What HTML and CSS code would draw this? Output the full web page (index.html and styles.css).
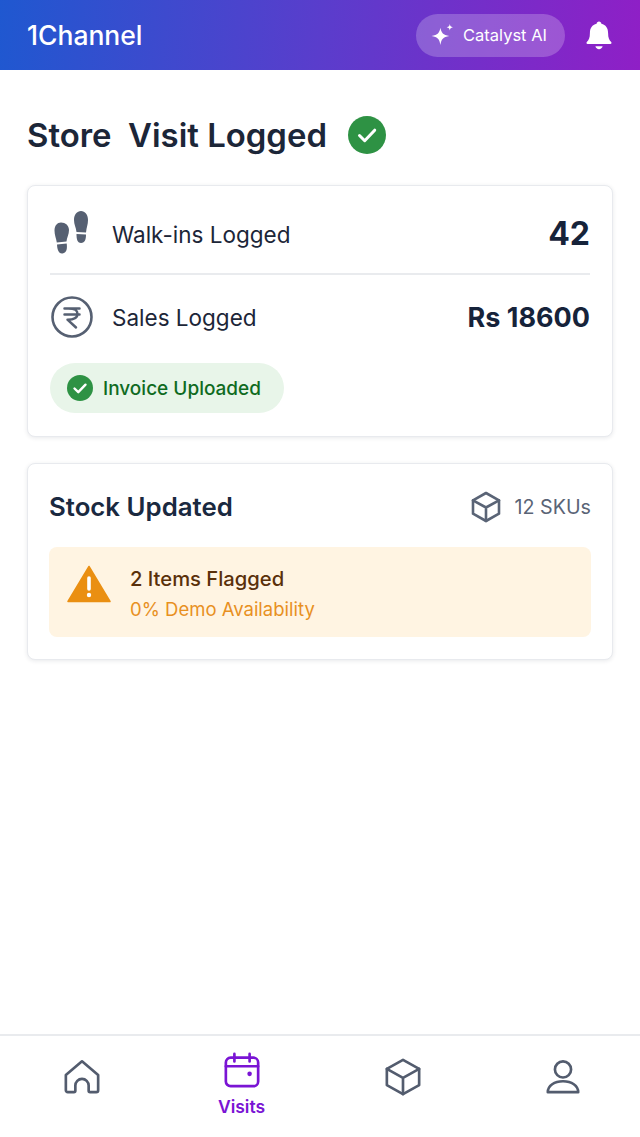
FILE: index.html
```html
<!DOCTYPE html>
<html lang="en">
<head>
  <meta charset="UTF-8">
  <title>Store Visit Logged</title>
  <link rel="stylesheet" href="styles.css">
</head>
<body>
  <header class="top-bar">
    <div class="brand">1Channel</div>
    <div class="top-actions">
      <div class="ai-pill">
        <svg class="ai-icon" viewBox="0 0 24 24" fill="#fff">
          <path d="M10 4.500c.9 5 2.500 6.800 8.500 8-6 1.200-7.600 3-8.500 8.500-.9-5.500-2.500-7.300-8.500-8.500 6-1.200 7.600-3 8.500-8z"/>
          <path d="M19 1c.3 2 .9 2.700 3 3.100-2.100.4-2.700 1.100-3 3.100-.3-2-.9-2.700-3-3.100 2.100-.4 2.700-1.100 3-3.100z"/>
        </svg>
        <span>Catalyst AI</span>
      </div>
      <svg class="bell" viewBox="0 0 26 30" fill="#fff">
        <path d="M13 1.500c1.300 0 2.200.9 2.300 2.200 4.300 1 6.500 4.300 6.500 8.800 0 4.600 1 6.800 3 8.700.7.700.3 2-.8 2H2c-1.100 0-1.500-1.300-.8-2 2-1.900 3-4.100 3-8.700 0-4.500 2.200-7.800 6.500-8.800.1-1.300 1-2.200 2.300-2.200z"/>
        <path d="M9.500 25.500h7c-.4 1.700-1.800 2.800-3.500 2.800s-3.100-1.100-3.500-2.800z"/>
      </svg>
    </div>
  </header>

  <main class="content">
    <div class="page-title">
      <h1>Store&nbsp; Visit Logged</h1>
      <svg class="title-check" viewBox="0 0 38 38">
        <circle cx="19" cy="19" r="19" fill="#2e9244"/>
        <path d="M11.500 19.500l5.200 5.200 10-10.500" fill="none" stroke="#fff" stroke-width="3" stroke-linecap="round" stroke-linejoin="round"/>
      </svg>
    </div>

    <section class="card card-visit">
      <div class="stat-row stat-row-first">
        <svg class="stat-icon" viewBox="0 0 44 44" fill="#566072">
          <path d="M31 0c4 0 7 3.500 7 9 0 4.500-1.500 7.500-2 12.500l-9.500-.5c-.5-4.500-2.500-7.500-2.500-12C24 3.500 27 0 31 0z"/>
          <path d="M26.500 23l9.500.5c0 4.500-1 8.500-5 8.500s-4.500-4.500-4.500-9z"/>
          <path d="M11 11.500c-3.800 0-6.500 3-6.500 8 0 4.500 1.700 8 2.300 12l9.700-1c.3-4 2.500-7 2.500-11.500 0-4.500-3.500-7.500-8-7.500z"/>
          <path d="M7 33.500l9.700-1c.6 4.500.3 9.500-4.200 10-4 .5-5.300-4.500-5.500-9z"/>
        </svg>
        <span class="stat-label stat-label-low">Walk-ins Logged</span>
        <span class="stat-value stat-value-big">42</span>
      </div>
      <div class="stat-row">
        <svg class="stat-icon" viewBox="0 0 44 44" fill="none" stroke="#566072">
          <circle cx="22" cy="22" r="19.500" stroke-width="2.600"/>
          <path d="M14.500 13.500h15M14.500 19.500h15M18 13.500c7 0 9.500 1.500 9.500 5.500 0 4-3 5.700-10 5.700L26 32.500" stroke-width="2.500" stroke-linecap="round" stroke-linejoin="round"/>
        </svg>
        <span class="stat-label">Sales Logged</span>
        <span class="stat-value">Rs 18600</span>
      </div>
      <div class="invoice-pill">
        <svg class="invoice-check" viewBox="0 0 26 26">
          <circle cx="13" cy="13" r="13" fill="#2e9244"/>
          <path d="M7.500 13.500l3.800 3.700 7.200-7.500" fill="none" stroke="#fff" stroke-width="2.400" stroke-linecap="round" stroke-linejoin="round"/>
        </svg>
        <span>Invoice Uploaded</span>
      </div>
    </section>

    <section class="card card-stock">
      <div class="stock-head">
        <h2>Stock Updated</h2>
        <div class="sku-count">
          <svg class="sku-icon" viewBox="0 0 30 32" fill="none" stroke="#5a6476" stroke-width="2.600" stroke-linejoin="round" stroke-linecap="round">
            <path d="M15 2l13 7.300v13.400L15 30 2 22.700V9.300z"/>
            <path d="M2 9.300l13 7.200 13-7.200M15 16.500V30"/>
          </svg>
          <span>12 SKUs</span>
        </div>
      </div>
      <div class="flag-box">
        <svg class="warn-icon" viewBox="0 0 44 38">
          <path d="M22 1.500L43 36.500H1z" fill="#ea8f12" stroke="#ea8f12" stroke-width="1.500" stroke-linejoin="round"/>
          <path d="M22 13v11" stroke="#fff" stroke-width="3.600" stroke-linecap="round"/>
          <circle cx="22" cy="30" r="2.200" fill="#fff"/>
        </svg>
        <div>
          <div class="flag-title">2 Items Flagged</div>
          <div class="flag-sub">0% Demo Availability</div>
        </div>
      </div>
    </section>
  </main>

  <nav class="bottom-nav">
    <div class="nav-item">
      <svg class="nav-icon" viewBox="0 0 40 40" fill="none" stroke="#535c6e" stroke-width="2.800" stroke-linejoin="round" stroke-linecap="round">
        <path d="M20 3.500L37 18v16a2 2 0 0 1-2 2h-6.500a1.500 1.500 0 0 1-1.500-1.500V29a7 7 0 0 0-14 0v5.500a1.500 1.500 0 0 1-1.500 1.500H5a2 2 0 0 1-2-2V18z"/>
      </svg>
    </div>
    <div class="nav-item nav-item-on">
      <svg class="nav-icon" viewBox="0 0 40 40" fill="none" stroke="#7a14d4" stroke-width="2.800" stroke-linejoin="round" stroke-linecap="round">
        <rect x="3" y="6" width="34" height="30" rx="5"/>
        <path d="M3 15h34M12 2v8M28 2v8"/>
        <circle cx="28" cy="23" r="2.400" fill="#7a14d4" stroke="none"/>
      </svg>
      <span>Visits</span>
    </div>
    <div class="nav-item">
      <svg class="nav-icon" viewBox="0 0 40 40" fill="none" stroke="#535c6e" stroke-width="2.800" stroke-linejoin="round" stroke-linecap="round">
        <path d="M20 2l17 9.500v17L20 38 3 28.500v-17z"/>
        <path d="M3 11.500L20 21l17-9.500M20 21v17"/>
      </svg>
    </div>
    <div class="nav-item">
      <svg class="nav-icon" viewBox="0 0 40 40" fill="none" stroke="#535c6e" stroke-width="2.800" stroke-linejoin="round" stroke-linecap="round">
        <circle cx="20" cy="12" r="8.500"/>
        <path d="M4 36c0-7 7-11.500 16-11.500S36 29 36 36z"/>
      </svg>
    </div>
  </nav>
</body>
</html>
```

FILE: styles.css
```css
html, body {
  height: 100%;
}
body {
  margin: 0;
  display: flex;
  flex-direction: column;
  background: #fff;
  color: #1c2638;
  font-family: Inter, "Liberation Sans", sans-serif;
}
svg {
  display: block;
  flex: none;
}

/* top bar */
.top-bar {
  height: 70px;
  box-sizing: border-box;
  padding: 0 27px;
  display: flex;
  align-items: center;
  justify-content: space-between;
  background: linear-gradient(95deg, #1f58d0 0%, #5a3dcc 50%, #8f1fc6 100%);
  color: #fff;
}
.brand {
  font-size: 26.500px;
  font-weight: 500;
}
.top-actions {
  display: flex;
  align-items: center;
  gap: 20px;
}
.ai-pill {
  width: 149px;
  height: 43px;
  box-sizing: border-box;
  padding-left: 14px;
  display: flex;
  align-items: center;
  gap: 8px;
  border-radius: 22px;
  background: rgba(255, 255, 255, .22);
  font-size: 16.500px;
}
.ai-icon {
  width: 25px;
  height: 25px;
}
.bell {
  width: 28px;
  height: 31px;
}

/* main */
.content {
  flex: 1;
  padding: 0 27px;
}
.page-title {
  height: 115px;
  box-sizing: border-box;
  padding-top: 14px;
  display: flex;
  align-items: center;
  gap: 21px;
}
h1 {
  margin: 0;
  font-size: 32.900px;
  font-weight: 600;
}
.title-check {
  width: 38px;
  height: 38px;
}
.card {
  box-sizing: border-box;
  border: 1px solid #e8eaee;
  border-radius: 8px;
  background: #fff;
  box-shadow: 0 1px 4px rgba(30, 40, 60, .1);
  padding: 0 22px;
}
.card-visit {
  height: 252px;
}
.card-stock {
  height: 197px;
  margin-top: 26px;
}
.stat-row {
  height: 84px;
  display: flex;
  align-items: center;
}
.stat-row-first {
  height: 89px;
  box-sizing: border-box;
  padding-top: 7px;
  border-bottom: 2px solid #e9ebee;
}
.stat-icon {
  width: 44px;
  height: 44px;
  margin-right: 18px;
}
.stat-label {
  font-size: 22.500px;
  flex: 1;
}
.stat-label-low {
  padding-top: 3px;
}
.stat-value {
  font-size: 27px;
  font-weight: 700;
  color: #16233a;
}
.stat-value-big {
  font-size: 32px;
}
.invoice-pill {
  width: 234px;
  height: 50px;
  box-sizing: border-box;
  padding-left: 17px;
  display: flex;
  align-items: center;
  gap: 10px;
  margin-top: 4px;
  border-radius: 25px;
  background: #e8f5e9;
  color: #0f6b1f;
  font-size: 19px;
  font-weight: 500;
}
.invoice-check {
  width: 26px;
  height: 26px;
}
.stock-head {
  height: 83px;
  box-sizing: border-box;
  padding-top: 2px;
  display: flex;
  align-items: center;
  justify-content: space-between;
}
h2 {
  margin: 0 0 0 -1px;
  font-size: 25.800px;
  font-weight: 600;
  color: #1a2940;
}
.sku-count {
  display: flex;
  align-items: center;
  gap: 14px;
  margin-right: -1px;
  font-size: 19.700px;
  color: #5a6476;
}
.sku-icon {
  width: 30px;
  height: 32px;
}
.flag-box {
  height: 90px;
  margin: 0 -1px;
  display: flex;
  align-items: center;
  gap: 19px;
  padding-left: 18px;
  border-radius: 8px;
  background: #fff4e2;
}
.warn-icon {
  width: 44px;
  height: 38px;
  margin-bottom: 16px;
}
.flag-title {
  margin-top: 4px;
  font-size: 20.200px;
  font-weight: 500;
  line-height: 31px;
  color: #5a300a;
}
.flag-sub {
  font-size: 18.500px;
  line-height: 31px;
  color: #e8901f;
}

/* bottom nav */
.bottom-nav {
  height: 103px;
  box-sizing: border-box;
  border-top: 2px solid #e9ebee;
  display: grid;
  grid-template-columns: 163px 157px 165px 155px;
}
.nav-item {
  display: flex;
  flex-direction: column;
  align-items: center;
  padding-top: 22px;
}
.nav-icon {
  width: 38px;
  height: 38px;
}
.nav-item-on {
  padding-top: 16px;
  color: #7a14d4;
  font-size: 17.500px;
  font-weight: 600;
}
.nav-item-on span {
  margin-top: 6px;
}
```
